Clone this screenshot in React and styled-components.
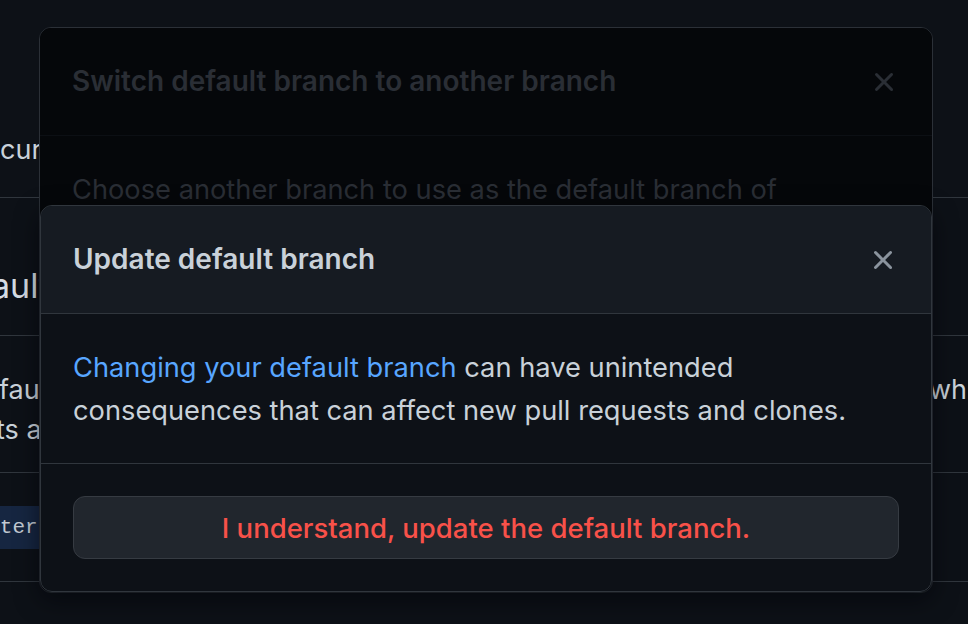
import styled, { createGlobalStyle } from "styled-components"

const GlobalStyle = createGlobalStyle`
  html, body {
    margin: 0;
    height: 100%;
    background: #0d1117;
  }
  body {
    font-family: Inter, "Noto Sans", sans-serif;
    overflow: hidden;
  }
  #root {
    height: 100%;
  }
`

const Page = styled.div`
  position: relative;
  width: 968px;
  height: 624px;
  overflow: hidden;
  background: #0d1117;
  color: #c9d1d9;
`

/* settings page behind the dialogs */
const Settings = styled.div`
  display: flex;
  flex-direction: column;
`

const Row = styled.div`
  height: ${(props) => props.$height}px;
  display: flex;
  align-items: ${(props) => props.$align || "flex-end"};
  padding-bottom: ${(props) => props.$pad || 0}px;
  box-sizing: border-box;
  border-bottom: 1px solid #30363d;
  white-space: nowrap;
`

const Text = styled.div`
  font-size: 27px;
  line-height: 40px;
  color: #c9d1d9;
  margin-left: ${(props) => props.$shift || 0}px;
`

const Heading = styled.h2`
  margin: 0 0 0 ${(props) => props.$shift || 0}px;
  font-size: 34px;
  line-height: 40px;
  font-weight: 400;
  color: #d5dce3;
`

const Columns = styled.div`
  display: grid;
  grid-template-columns: 933px 1fr;
  width: 100%;
`

const Lines = styled.div`
  display: flex;
  flex-direction: column;
`

const Branch = styled.code`
  margin-left: -50px;
  padding: 0 12px;
  height: 43px;
  display: flex;
  align-items: center;
  border-radius: 10px;
  background: #162641;
  font-family: "Liberation Mono", "DejaVu Sans Mono", monospace;
  font-size: 21px;
  color: #c2cad3;
`

/* dialogs */
const Dialog = styled.div`
  position: absolute;
  left: ${(props) => props.$left}px;
  top: ${(props) => props.$top}px;
  width: ${(props) => props.$width}px;
  height: ${(props) => (props.$height ? `${props.$height}px` : "auto")};
  box-sizing: border-box;
  border: 1px solid ${(props) => (props.$dim ? "#2b3037" : "#30363d")};
  border-radius: 12px;
  overflow: hidden;
  background: ${(props) => (props.$dim ? "#05070a" : "#0d1117")};
  box-shadow: ${(props) => (props.$dim ? "none" : "0 8px 24px rgba(1, 4, 9, 0.6)")};
`

const Header = styled.div`
  display: flex;
  align-items: center;
  justify-content: space-between;
  padding: 32px;
  height: 108px;
  box-sizing: border-box;
  background: ${(props) => (props.$dim ? "#05070a" : "#161b22")};
  border-bottom: 1px solid ${(props) => (props.$dim ? "#0c0f14" : "#30363d")};
`

const Title = styled.h1`
  margin: -2px 0 0;
  font-size: 28px;
  line-height: 42px;
  font-weight: 600;
  color: ${(props) => (props.$dim ? "#2a2e35" : "#c9d1d9")};
`

const Close = styled.button`
  width: 32px;
  height: 32px;
  padding: 0;
  border: 0;
  background: none;
  display: grid;
  place-items: center;
  color: ${(props) => (props.$dim ? "#2a2e35" : "#8b949e")};
  svg {
    width: 32px;
    height: 32px;
    fill: currentColor;
  }
`

const Body = styled.div`
  padding: 32px 32px 31px;
  font-size: 27.25px;
  line-height: 43px;
  color: ${(props) => (props.$dim ? "#2a2e35" : "#c9d1d9")};
  border-bottom: ${(props) => (props.$dim ? "none" : "1px solid #30363d")};
  white-space: ${(props) => (props.$dim ? "nowrap" : "normal")};
  a {
    color: #58a6ff;
    text-decoration: none;
  }
`

const Footer = styled.div`
  padding: 32px;
`

const DangerButton = styled.button`
  display: block;
  width: 100%;
  height: 63px;
  border: 1px solid #363b42;
  border-radius: 12px;
  background: #21262d;
  color: #f85149;
  font-family: inherit;
  font-size: 27.5px;
  font-weight: 500;
`

const XIcon = () => (
  <svg viewBox="0 0 16 16" aria-hidden="true">
    <path d="M3.72 3.72a.75.75 0 0 1 1.06 0L8 6.94l3.22-3.22a.749.749 0 0 1 1.275.326.749.749 0 0 1-.215.734L9.06 8l3.22 3.22a.749.749 0 0 1-.326 1.275.749.749 0 0 1-.734-.215L8 9.06l-3.22 3.22a.751.751 0 0 1-1.042-.018.751.751 0 0 1-.018-1.042L6.94 8 3.72 4.78a.75.75 0 0 1 0-1.06Z" />
  </svg>
)

const App = () => {
  return (
    <Page>
      <GlobalStyle />
      <Settings>
        <Row $height={198} $pad={27}>
          <Text>current settings</Text>
        </Row>
        <Row $height={138} $pad={29}>
          <Heading $shift={-9}>ault branch</Heading>
        </Row>
        <Row $height={137} $pad={22}>
          <Columns>
            <Lines>
              <Text $shift={-1}>fault branch is considered the base branch</Text>
              <Text $shift={-4}>ts are automatically made</Text>
            </Lines>
            <Lines>
              <Text $shift={-4}>which</Text>
            </Lines>
          </Columns>
        </Row>
        <Row $height={109} $align="center">
          <Branch>master</Branch>
        </Row>
      </Settings>

      <Dialog $dim $left={39} $top={27} $width={894} $height={566}>
        <Header $dim>
          <Title $dim>Switch default branch to another branch</Title>
          <Close $dim aria-label="Close">
            <XIcon />
          </Close>
        </Header>
        <Body $dim>Choose another branch to use as the default branch of</Body>
      </Dialog>

      <Dialog $left={40} $top={205} $width={892}>
        <Header>
          <Title>Update default branch</Title>
          <Close aria-label="Close">
            <XIcon />
          </Close>
        </Header>
        <Body>
          <a href="#">Changing your default branch</a> can have unintended
          consequences that can affect new pull requests and clones.
        </Body>
        <Footer>
          <DangerButton>I understand, update the default branch.</DangerButton>
        </Footer>
      </Dialog>
    </Page>
  )
}

export default App
